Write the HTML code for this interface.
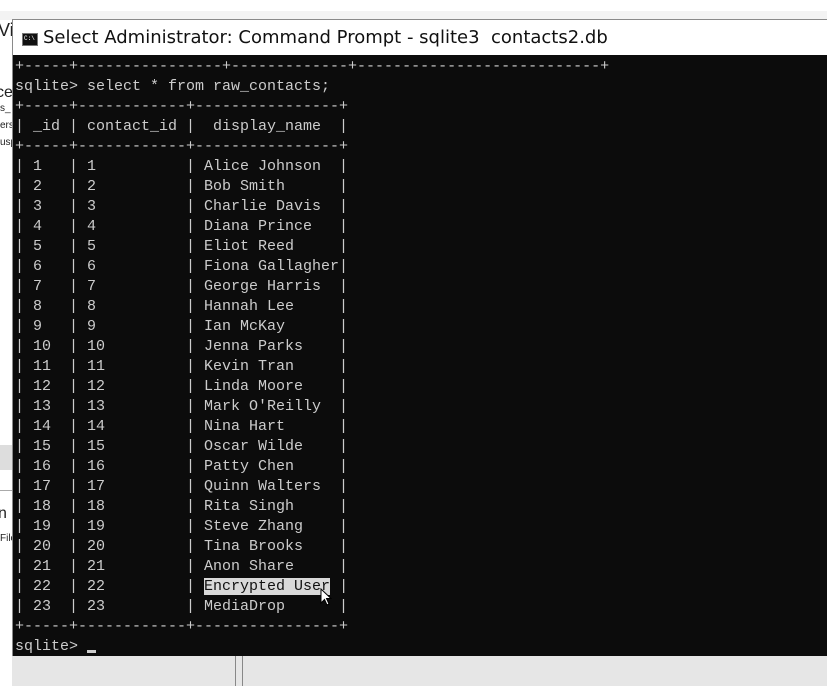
<!DOCTYPE html>
<html><head><meta charset="utf-8"><style>
html,body{margin:0;padding:0;width:827px;height:686px;overflow:hidden;background:#fff;position:relative;font-family:"Liberation Sans",sans-serif}
.top{position:absolute;left:0;top:0;width:827px;height:11px;background:#fff}
.band{position:absolute;left:0;top:11px;width:827px;height:9px;background:#f3f3f3}
.left{position:absolute;left:0;top:20px;width:12px;height:666px;background:#fff;font-size:13px;color:#222;overflow:hidden}
.win{position:absolute;left:12px;top:19px;width:815px;height:637px;border-top:1px solid #8a8a8a;border-left:1px solid #8a8a8a;background:#fff}
.title{position:absolute;left:30px;top:7px;font-size:18px;color:#111;font-family:"DejaVu Sans","Liberation Sans",sans-serif;white-space:pre}
.icon{position:absolute;left:9px;top:13px;width:14px;height:11px;background:#111;border:1px solid #777}
.icon:after{content:"C:\\";position:absolute;left:1px;top:1px;font-size:6px;color:#fff;font-family:"Liberation Mono",monospace}
.term{position:absolute;left:0;top:35px;width:815px;height:602px;background:#0c0c0c}
pre{margin:0;position:absolute;left:2px;top:2px;font-family:"Liberation Mono",monospace;font-size:15px;line-height:20px;color:#cccccc}
.sel{background:#d9d9d9;color:#111}
.cur{display:inline-block;width:9px;height:3px;background:#ccc;vertical-align:-3px}
.bottom{position:absolute;left:12px;top:656px;width:815px;height:30px;background:#e6e6e6}
.vl{position:absolute;top:656px;height:30px;width:1px;background:#888}
</style></head><body>
<div class="top"></div><div class="band"></div>
<div class="left">
<div style="position:absolute;top:0;left:-2px;font-size:18px">Vi</div>
<div style="position:absolute;top:64px;left:-4px;font-size:16px">ce</div>
<div style="position:absolute;top:83px;left:0;font-size:10px">s_</div>
<div style="position:absolute;top:100px;left:0;font-size:10px">ers</div>
<div style="position:absolute;top:117px;left:0;font-size:10px">usp</div>
<div style="position:absolute;top:425px;left:0;width:12px;height:25px;background:#ddd"></div>
<div style="position:absolute;top:470px;left:0;width:12px;height:1px;background:#aaa"></div>
<div style="position:absolute;top:485px;left:-2px;font-size:16px">n</div>
<div style="position:absolute;top:513px;left:0;font-size:10px">File</div>
</div>
<div class="win">
<div class="icon"></div>
<div class="title">Select Administrator: Command Prompt - sqlite3  contacts2.db</div>
<div class="term"><pre>+-----+----------------+-------------+---------------------------+
sqlite&gt; select * from raw_contacts;
+-----+------------+----------------+
| _id | contact_id |  display_name  |
+-----+------------+----------------+
| 1   | 1          | Alice Johnson  |
| 2   | 2          | Bob Smith      |
| 3   | 3          | Charlie Davis  |
| 4   | 4          | Diana Prince   |
| 5   | 5          | Eliot Reed     |
| 6   | 6          | Fiona Gallagher|
| 7   | 7          | George Harris  |
| 8   | 8          | Hannah Lee     |
| 9   | 9          | Ian McKay      |
| 10  | 10         | Jenna Parks    |
| 11  | 11         | Kevin Tran     |
| 12  | 12         | Linda Moore    |
| 13  | 13         | Mark O'Reilly  |
| 14  | 14         | Nina Hart      |
| 15  | 15         | Oscar Wilde    |
| 16  | 16         | Patty Chen     |
| 17  | 17         | Quinn Walters  |
| 18  | 18         | Rita Singh     |
| 19  | 19         | Steve Zhang    |
| 20  | 20         | Tina Brooks    |
| 21  | 21         | Anon Share     |
| 22  | 22         | <span class="sel">Encrypted User</span> |
| 23  | 23         | MediaDrop      |
+-----+------------+----------------+
sqlite&gt; <span class="cur"></span></pre>
<svg style="position:absolute;left:307px;top:533px" width="14" height="20" viewBox="0 0 14 20"><path d="M1 1 L1 15 L4.5 11.5 L7 17 L9 16 L6.5 10.5 L11 10.5 Z" fill="#fff" stroke="#000" stroke-width="1"/></svg>
</div>
</div>
<div class="bottom"></div>
<div class="vl" style="left:235px"></div><div class="vl" style="left:242px"></div>
</body></html>
